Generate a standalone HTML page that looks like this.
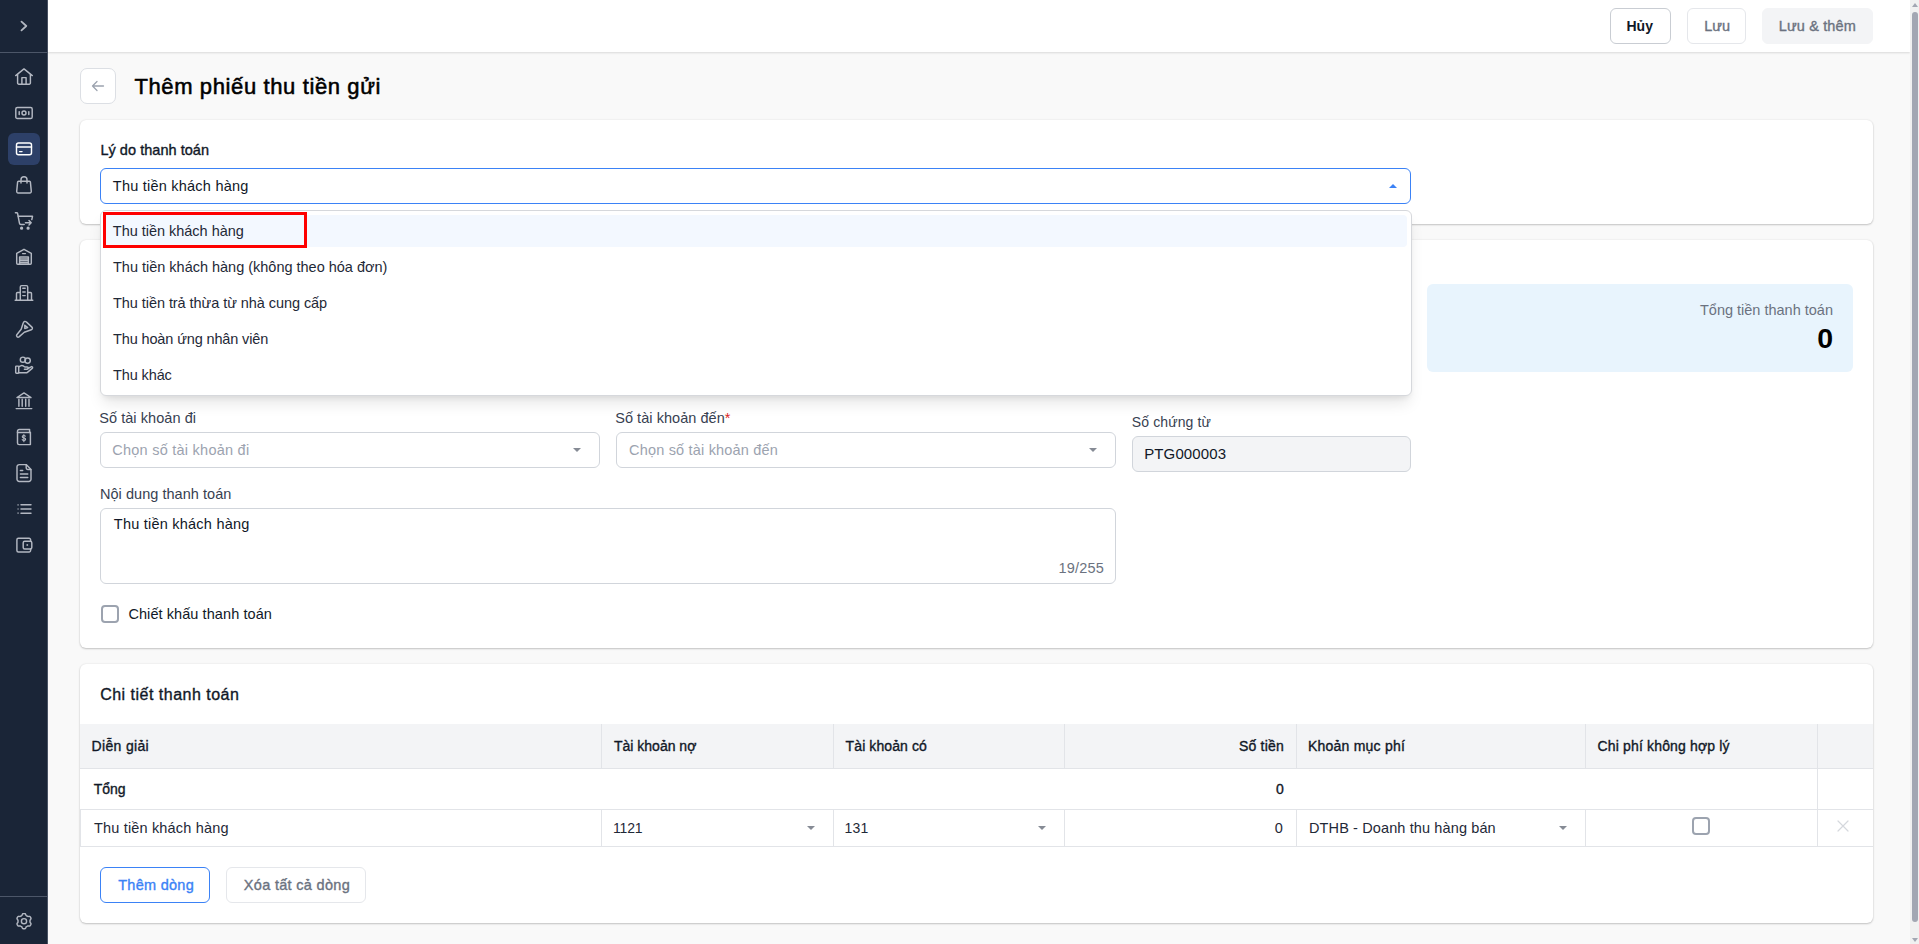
<!DOCTYPE html>
<html lang="vi">
<head>
<meta charset="utf-8">
<title>Thêm phiếu thu tiền gửi</title>
<style>
*{box-sizing:border-box;margin:0;padding:0}
html,body{width:1919px;height:944px;overflow:hidden;background:#f9f9f9;font-family:"Liberation Sans",sans-serif;font-size:14px;color:#111827}
.abs{position:absolute}
.t{position:absolute;white-space:nowrap;line-height:20px;font-size:14.5px}
.md{-webkit-text-stroke:0.35px currentColor}
#side{position:absolute;left:0;top:0;width:48px;height:944px;background:#1a2537;border-right:1px solid #4a5465}
#side .sep{position:absolute;left:0;width:47px;height:1px;background:#4c5668}
#side .act{position:absolute;left:8px;top:133px;width:32px;height:32px;border-radius:6px;background:#2d4068}
#side svg{position:absolute;left:14px;width:20px;height:20px;fill:none;stroke:#b3b8c2;stroke-width:1.45;stroke-linecap:round;stroke-linejoin:round}
#top{position:absolute;left:48px;top:0;width:1862px;height:52px;background:#fff;box-shadow:0 1px 2px rgba(0,0,0,.13)}
.btn{position:absolute;height:36px;border-radius:6px;border:1px solid #d1d5db;background:#fff;font-size:14.5px;text-align:center;line-height:34px;white-space:nowrap}
.card{position:absolute;left:80px;width:1793px;background:#fff;border-radius:6px;box-shadow:0 1px 2px rgba(0,0,0,.2),0 0 2px rgba(0,0,0,.1)}
.inp{position:absolute;height:36px;border:1px solid #d1d5db;border-radius:6px;background:#fff}
.caret{position:absolute;width:0;height:0;border-left:4px solid transparent;border-right:4px solid transparent;border-top:4px solid #868b95}
.vl{position:absolute;width:1px;background:#e2e4e8}
.th{color:#111827;font-size:14px;-webkit-text-stroke:0.35px currentColor}
.td{color:#1f2937}
#sb{position:absolute;left:1910px;top:0;width:9px;height:944px;background:#f0f1f1}
/*FIT*/
#title{letter-spacing:0.62px;margin-left:-0.6px}
#l1{letter-spacing:0.04px;margin-left:0.4px}
#s1{letter-spacing:0.23px;margin-left:-0.2px}
#o1{letter-spacing:-0.02px;margin-left:-0.2px}
#o2{letter-spacing:-0.01px;margin-left:0.0px}
#o3{letter-spacing:-0.06px;margin-left:0.0px}
#o4{letter-spacing:-0.13px;margin-left:0.0px}
#o5{letter-spacing:-0.11px;margin-left:0.0px}
#tt{letter-spacing:0.00px;margin-right:-0.0px}
#tz{letter-spacing:0.00px;margin-right:-0.2px}
#l2{letter-spacing:0.06px;margin-left:-0.8px}
#p2{letter-spacing:0.25px;margin-left:-0.8px}
#l3{letter-spacing:0.05px;margin-left:-0.8px}
#p3{letter-spacing:0.19px;margin-left:0.0px}
#l4{letter-spacing:0.12px;margin-left:-0.2px}
#v4{letter-spacing:0.12px;margin-left:-0.8px}
#l5{letter-spacing:0.04px;margin-left:0.0px}
#v5{letter-spacing:0.23px;margin-left:0.8px}
#c5{letter-spacing:0.20px;margin-right:-0.0px}
#l6{letter-spacing:0.08px;margin-left:0.4px}
#h3{letter-spacing:0.49px;margin-left:0.2px}
#th1{letter-spacing:0.33px;margin-left:-0.4px}
#th2{letter-spacing:0.00px;margin-left:0.0px}
#th3{letter-spacing:0.09px;margin-left:-0.4px}
#th4{letter-spacing:0.20px;margin-right:-0.0px}
#th5{letter-spacing:0.22px;margin-left:0.0px}
#th6{letter-spacing:0.15px;margin-left:-0.4px}
#tr1{letter-spacing:-0.07px;margin-left:1.8px}
#tr2{letter-spacing:0.00px;margin-right:0.2px}
#td1{letter-spacing:0.17px;margin-left:1.0px}
#td2{letter-spacing:-0.20px;margin-left:-1.0px}
#td3{letter-spacing:0.20px;margin-left:-1.4px}
#td4{letter-spacing:0.00px;margin-right:0.2px}
#td5{letter-spacing:0.12px;margin-left:0.0px}
#bt1{letter-spacing:0.10px;margin-right:-0.10px;position:relative;left:-0.8px}
#bt2{letter-spacing:0.00px;margin-right:-0.00px;position:relative;left:0.6px}
#bt3{letter-spacing:0.13px;margin-right:-0.13px;position:relative;left:-0.2px}
#bt4{letter-spacing:0.28px;margin-right:-0.28px;position:relative;left:1.0px}
#bt5{letter-spacing:0.31px;margin-right:-0.31px;position:relative;left:0.8px}
/*ENDFIT*/
</style>
</head>
<body>
<!-- sidebar -->
<div id="side">
  <div class="sep" style="top:52px"></div>
  <div class="act"></div>
  <!--ICONS-->
  <svg viewBox="0 0 20 20" style="top:16px;stroke-width:1.8"><path d="M7.5 5.7 12.3 10 7.5 14.3"/></svg>
  <svg viewBox="0 0 20 20" style="top:67px"><path d="M1.7 8.6 10 1.9l8.3 6.7"/><path d="M3.6 7.4v8.6a1.2 1.2 0 0 0 1.2 1.2h10.4a1.2 1.2 0 0 0 1.2-1.2V7.4"/><path d="M7.9 17v-6.4h4.2V17"/></svg>
  <svg viewBox="0 0 20 20" style="top:103px"><rect x="1.8" y="4.5" width="16.4" height="11" rx="1.6"/><circle cx="10" cy="10" r="2"/><path d="M5.2 8.6v2.8M14.8 8.6v2.8"/></svg>
  <svg viewBox="0 0 20 20" style="top:139px;stroke:#fff"><rect x="2.5" y="4" width="15" height="11.7" rx="2"/><path d="M2.5 8h15"/><path d="M5.6 12.6h2.4"/></svg>
  <svg viewBox="0 0 20 20" style="top:175px"><path d="M4.6 6.2h10.8a1 1 0 0 1 1 .9l.9 9.3a1.4 1.4 0 0 1-1.4 1.5H4.1a1.4 1.4 0 0 1-1.4-1.5l.9-9.3a1 1 0 0 1 1-.9z"/><path d="M7 8V4.8a3 3 0 0 1 6 0V8"/></svg>
  <svg viewBox="0 0 20 20" style="top:211px"><path d="M1.4 1.7h1.2a1 1 0 0 1 1 .8l1.9 9.9a1.3 1.3 0 0 0 1.3 1.1h3.4"/><path d="M4.3 5.3h14.2l-.7 3.3"/><path d="M11.4 11.7h5.8M15 9.5l2.2 2.2-2.2 2.2"/><circle cx="7.6" cy="17.2" r=".9" fill="#b3b8c2"/><circle cx="14.1" cy="17.2" r=".9" fill="#b3b8c2"/></svg>
  <svg viewBox="0 0 20 20" style="top:247px"><path d="M2.7 6.3 10 2.3l7.3 4v9.9a1.1 1.1 0 0 1-1.1 1.1H3.8a1.1 1.1 0 0 1-1.1-1.1z"/><path d="M5.6 17.3V9.9h8.8v7.4M5.6 11.9h8.8M5.6 13.8h8.8M5.6 15.7h8.8M8.6 6.6h2.8"/></svg>
  <svg viewBox="0 0 20 20" style="top:283px"><path d="M1.2 17.3h17.6"/><path d="M6.3 17.3V3.9a1.3 1.3 0 0 1 1.3-1.3h4.8a1.3 1.3 0 0 1 1.3 1.3v13.4"/><path d="M6.3 9.5H3.5a1 1 0 0 0-1 1v6.8M13.7 9.5h2.8a1 1 0 0 1 1 1v6.8"/><path d="M8.8 5.3h2.4M8.8 8.9h2.4M8.8 12.6h2.4"/></svg>
  <svg viewBox="0 0 20 20" style="top:319px"><path d="M9.300 3.700a1.800 1.800 0 0 1 3-.800l5.600 5.200a1.600 1.600 0 0 1-.6 2.700l-7 2.500-5.300 4.600a1.600 1.600 0 0 1-2.200-2.200l4.400-5.400z"/><path d="M10.800 6.300v3.300l2.900-1.100z"/></svg>
  <svg viewBox="0 0 20 20" style="top:355px"><circle cx="8.900" cy="4.700" r="2.600"/><circle cx="13.600" cy="5.600" r="2.700"/><rect x="1.700" y="11.100" width="3" height="7.100" rx=".700"/><path d="M4.700 11.900 6.600 10.900a2.400 2.400 0 0 1 2.600 0l1.600 1.100h2.400a1.100 1.100 0 0 1 0 2.200H10.400"/><path d="M13.800 13.700l3.200-1.900a1 1 0 0 1 1.200 1.600l-4.500 3.700a3 3 0 0 1-1.900.700H4.700"/></svg>
  <svg viewBox="0 0 20 20" style="top:391px"><path d="M3 6.500 10 1.900l7 4.600z"/><path d="M4.900 8.300v6.900M8.200 8.300v6.900M11.700 8.300v6.900M15 8.300v6.900"/><path d="M2.200 17.600h15.600"/></svg>
  <svg viewBox="0 0 20 20" style="top:427px;will-change:transform"><path d="M16.400 5.500V17.600H5.200a1.700 1.700 0 0 1-1.700-1.700V4.200a1.700 1.700 0 0 1 1.700-1.700H15.600V5.500"/><path d="M3.500 5.500h12.900"/><path d="M9.900 7.900v6.900" stroke-width="1"/><text x="9.900" y="14.100" text-anchor="middle" font-family="Liberation Sans,sans-serif" font-size="8.500" font-weight="bold" stroke="none" fill="#b3b8c2">$</text></svg>
  <svg viewBox="0 0 20 20" style="top:463px"><path d="M12.200 1.600H5.200a2.200 2.200 0 0 0-2.200 2.200v12.400a2.200 2.200 0 0 0 2.200 2.200h9.600a2.200 2.200 0 0 0 2.200-2.200V6.400z"/><path d="M12.200 1.800v3.200a1.400 1.400 0 0 0 1.400 1.400h3.200"/><path d="M6.400 7.400h2.300M6.400 10.900h7.400M6.400 14.400h7.400"/></svg>
  <svg viewBox="0 0 20 20" style="top:499px"><path d="M7 5.800h10M7 10h10M7 14.200h10"/><path d="M3.600 5.800h.9M3.600 10h.9M3.600 14.200h.9" stroke-linecap="butt" stroke-width="1.700"/></svg>
  <svg viewBox="0 0 20 20" style="top:535px"><path d="M16.600 6.300V4.700a1.500 1.500 0 0 0-1.500-1.500H4.400a1.500 1.500 0 0 0-1.500 1.500v10.800a1.500 1.500 0 0 0 1.500 1.500h10.700a1.500 1.500 0 0 0 1.500-1.500v-1.600"/><rect x="9.200" y="6.300" width="8.600" height="7.600" rx="1.500"/><rect x="12.500" y="9.200" width="1.600" height="1.600" fill="#b3b8c2" stroke="none"/></svg>
  <svg viewBox="0 0 20 20" style="top:911px"><path d="M10.00 2.60L10.50 2.62L10.99 2.71L11.44 2.98L11.76 3.63L12.00 4.29L12.32 4.61L12.66 4.81L13.00 5.00L13.34 5.20L13.68 5.40L14.11 5.51L14.81 5.39L15.54 5.35L15.99 5.60L16.31 5.98L16.58 6.40L16.81 6.84L16.98 7.31L16.97 7.83L16.57 8.44L16.12 8.98L16.00 9.41L15.99 9.81L16.00 10.20L15.99 10.59L16.00 10.99L16.12 11.42L16.57 11.96L16.97 12.57L16.98 13.09L16.81 13.56L16.58 14.00L16.31 14.42L15.99 14.80L15.54 15.05L14.81 15.01L14.11 14.89L13.68 15.00L13.34 15.20L13.00 15.40L12.66 15.59L12.32 15.79L12.00 16.11L11.76 16.77L11.44 17.42L10.99 17.69L10.50 17.78L10.00 17.80L9.50 17.78L9.01 17.69L8.56 17.42L8.24 16.77L8.00 16.11L7.68 15.79L7.34 15.59L7.00 15.40L6.66 15.20L6.32 15.00L5.89 14.89L5.19 15.01L4.46 15.05L4.01 14.80L3.69 14.42L3.42 14.00L3.19 13.56L3.02 13.09L3.03 12.57L3.43 11.96L3.88 11.42L4.00 10.99L4.01 10.59L4.00 10.20L4.01 9.81L4.00 9.41L3.88 8.98L3.43 8.44L3.03 7.83L3.02 7.31L3.19 6.84L3.42 6.40L3.69 5.98L4.01 5.60L4.46 5.35L5.19 5.39L5.89 5.51L6.32 5.40L6.66 5.20L7.00 5.00L7.34 4.81L7.68 4.61L8.00 4.29L8.24 3.63L8.56 2.98L9.01 2.71L9.50 2.62z"/><circle cx="10" cy="10.2" r="2.600"/></svg>
  <!--/ICONS-->
  <div class="sep" style="top:896px"></div>
</div>

<!-- top bar -->
<div id="top"></div>
<div class="btn" style="left:1610px;top:8px;width:61px;color:#111827;border-color:#c9cdd3;font-weight:bold;font-size:14px"><span class="t2" id="bt1">Hủy</span></div>
<div class="btn" style="left:1687px;top:8px;width:59px;color:#6b7280;border-color:#e5e7eb"><span class="t2 md" id="bt2">Lưu</span></div>
<div class="btn" style="left:1762px;top:8px;width:111px;color:#6b7280;border-color:#f3f4f6;background:#f3f4f6"><span class="t2 md" id="bt3">Lưu &amp; thêm</span></div>

<!-- title -->
<div class="abs" style="left:80px;top:68px;width:36px;height:36px;border:1px solid #dcdfe4;border-radius:7px;background:#fff">
  <svg width="16" height="16" viewBox="0 0 16 16" style="position:absolute;left:9px;top:9px" fill="none" stroke="#9ca3af" stroke-width="1.3" stroke-linecap="round" stroke-linejoin="round"><path d="M13.5 8h-11M7 3.5 2.5 8 7 12.5"/></svg>
</div>
<div class="t" id="title" style="left:135px;top:71px;font-size:22px;line-height:32px;color:#000;-webkit-text-stroke:0.55px #000">Thêm phiếu thu tiền gửi</div>

<!-- card 1 -->
<div class="card" style="top:120px;height:104px"></div>
<div class="t md" id="l1" style="left:100px;top:140px">Lý do thanh toán</div>
<div class="inp" style="left:100px;top:168px;width:1311px;border-color:#3b82f6;border-radius:6px"></div>
<div class="t" id="s1" style="left:113px;top:176px">Thu tiền khách hàng</div>
<div class="caret" style="left:1389px;top:184px;border-top:none;border-bottom:4px solid #3b82f6"></div>

<!-- card 2 -->
<div class="card" style="top:240px;height:408px"></div>
<div class="abs" style="left:1427px;top:284px;width:426px;height:88px;border-radius:6px;background:#e8f4fd"></div>
<div class="t" id="tt" style="right:86px;top:300px;color:#6b7280">Tổng tiền thanh toán</div>
<div class="t" id="tz" style="right:86px;top:320px;font-size:28.5px;line-height:36px;font-weight:bold;color:#000">0</div>

<div class="t" id="l2" style="left:100px;top:408px;color:#374151">Số tài khoản đi</div>
<div class="inp" style="left:100px;top:432px;width:500px"></div>
<div class="t" id="p2" style="left:113px;top:440px;color:#9ca3af">Chọn số tài khoản đi</div>
<div class="caret" style="left:573px;top:448px"></div>

<div class="t" id="l3" style="left:616px;top:408px;color:#374151">Số tài khoản đến<span style="color:#dc2626">*</span></div>
<div class="inp" style="left:616px;top:432px;width:500px"></div>
<div class="t" id="p3" style="left:629px;top:440px;color:#9ca3af">Chọn số tài khoản đến</div>
<div class="caret" style="left:1089px;top:448px"></div>

<div class="t" id="l4" style="left:1132px;top:412px;color:#374151;font-size:14px">Số chứng từ</div>
<div class="inp" style="left:1132px;top:436px;width:279px;background:#f3f4f6"></div>
<div class="t" id="v4" style="left:1145px;top:444px;color:#111827;font-size:15px">PTG000003</div>

<div class="t" id="l5" style="left:100px;top:484px;color:#374151">Nội dung thanh toán</div>
<div class="inp" style="left:100px;top:508px;width:1016px;height:76px"></div>
<div class="t" id="v5" style="left:113px;top:514px">Thu tiền khách hàng</div>
<div class="t" id="c5" style="right:815px;top:558px;color:#6b7280">19/255</div>

<div class="abs" style="left:101px;top:605px;width:18px;height:18px;border:2px solid #9ca3af;border-radius:4px;background:#fff"></div>
<div class="t" id="l6" style="left:128px;top:604px;color:#111827">Chiết khấu thanh toán</div>

<!-- dropdown -->
<div class="abs" style="left:100px;top:210px;width:1312px;height:186px;background:#fff;border:1px solid #d6d8dc;border-radius:6px;box-shadow:0 10px 15px -3px rgba(0,0,0,.1),0 4px 6px -3px rgba(0,0,0,.09)"></div>
<div class="abs" style="left:104px;top:215px;width:1303px;height:32px;background:#f3f8ff;border-radius:4px"></div>
<div class="abs" style="left:103px;top:212px;width:204px;height:36px;border:3px solid #fe0000"></div>
<div class="t o" id="o1" style="left:113px;top:221px;color:#1f2937">Thu tiền khách hàng</div>
<div class="t o" id="o2" style="left:113px;top:257px;color:#1f2937">Thu tiền khách hàng (không theo hóa đơn)</div>
<div class="t o" id="o3" style="left:113px;top:293px;color:#1f2937">Thu tiền trả thừa từ nhà cung cấp</div>
<div class="t o" id="o4" style="left:113px;top:329px;color:#1f2937">Thu hoàn ứng nhân viên</div>
<div class="t o" id="o5" style="left:113px;top:365px;color:#1f2937">Thu khác</div>

<!-- card 3 -->
<div class="card" style="top:664px;height:259px"></div>
<div class="t md" id="h3" style="left:100px;top:683px;font-size:16px;line-height:24px;color:#111827">Chi tiết thanh toán</div>
<div class="abs" style="left:80px;top:724px;width:1793px;height:45px;background:#f3f4f6;border-bottom:1px solid #e2e4e8"></div>
<!-- column borders header -->
<div class="vl" style="left:601px;top:724px;height:44px"></div>
<div class="vl" style="left:833px;top:724px;height:44px"></div>
<div class="vl" style="left:1064px;top:724px;height:44px"></div>
<div class="vl" style="left:1296px;top:724px;height:44px"></div>
<div class="vl" style="left:1585px;top:724px;height:44px"></div>
<div class="vl" style="left:1817px;top:724px;height:122px"></div>
<div class="t th" id="th1" style="left:92px;top:736px">Diễn giải</div>
<div class="t th" id="th2" style="left:614px;top:736px">Tài khoản nợ</div>
<div class="t th" id="th3" style="left:846px;top:736px">Tài khoản có</div>
<div class="t th" id="th4" style="right:635px;top:736px">Số tiền</div>
<div class="t th" id="th5" style="left:1308px;top:736px">Khoản mục phí</div>
<div class="t th" id="th6" style="left:1598px;top:736px">Chi phí không hợp lý</div>
<!-- total row -->
<div class="t th" id="tr1" style="left:92px;top:779px">Tổng</div>
<div class="t th" id="tr2" style="right:635px;top:779px">0</div>
<!-- data row -->
<div class="abs" style="left:80px;top:809px;width:1793px;height:38px;border-top:1px solid #e2e4e8;border-bottom:1px solid #e2e4e8;border-left:1px solid #e2e4e8"></div>
<div class="vl" style="left:601px;top:809px;height:37px"></div>
<div class="vl" style="left:833px;top:809px;height:37px"></div>
<div class="vl" style="left:1064px;top:809px;height:37px"></div>
<div class="vl" style="left:1296px;top:809px;height:37px"></div>
<div class="vl" style="left:1585px;top:809px;height:37px"></div>
<div class="t td" id="td1" style="left:93px;top:818px">Thu tiền khách hàng</div>
<div class="t td" id="td2" style="left:614px;top:818px;font-size:14px">1121</div>
<div class="caret" style="left:807px;top:826px"></div>
<div class="t td" id="td3" style="left:846px;top:818px;font-size:14px">131</div>
<div class="caret" style="left:1038px;top:826px"></div>
<div class="t td" id="td4" style="right:636px;top:818px">0</div>
<div class="t td" id="td5" style="left:1309px;top:818px">DTHB - Doanh thu hàng bán</div>
<div class="caret" style="left:1559px;top:826px"></div>
<div class="abs" style="left:1692px;top:817px;width:18px;height:18px;border:2px solid #9ca3af;border-radius:4px;background:#fff"></div>
<svg class="abs" style="left:1836px;top:819px" width="14" height="14" viewBox="0 0 14 14" fill="none" stroke="#d5d8dd" stroke-width="1.2" stroke-linecap="round"><path d="M2 2l10 10M12 2 2 12"/></svg>
<!-- buttons -->
<div class="btn" id="b1" style="left:100px;top:867px;width:110px;color:#3b82f6;border-color:#3b82f6"><span class="t2 md" id="bt4">Thêm dòng</span></div>
<div class="btn" id="b2" style="left:226px;top:867px;width:140px;color:#6b7280;border-color:#e5e7eb"><span class="t2 md" id="bt5">Xóa tất cả dòng</span></div>

<!-- scrollbar -->
<div id="sb">
  <div class="abs" style="left:2px;top:12px;width:6px;height:910px;border-radius:3px;background:#a2a7b3"></div>
  <div class="abs" style="left:2px;top:3px;width:0;height:0;border-left:3px solid transparent;border-right:3px solid transparent;border-bottom:4px solid #a2a7b3"></div>
  <div class="abs" style="left:2px;top:938px;width:0;height:0;border-left:3px solid transparent;border-right:3px solid transparent;border-top:4px solid #a2a7b3"></div>
</div>
</body>
</html>
